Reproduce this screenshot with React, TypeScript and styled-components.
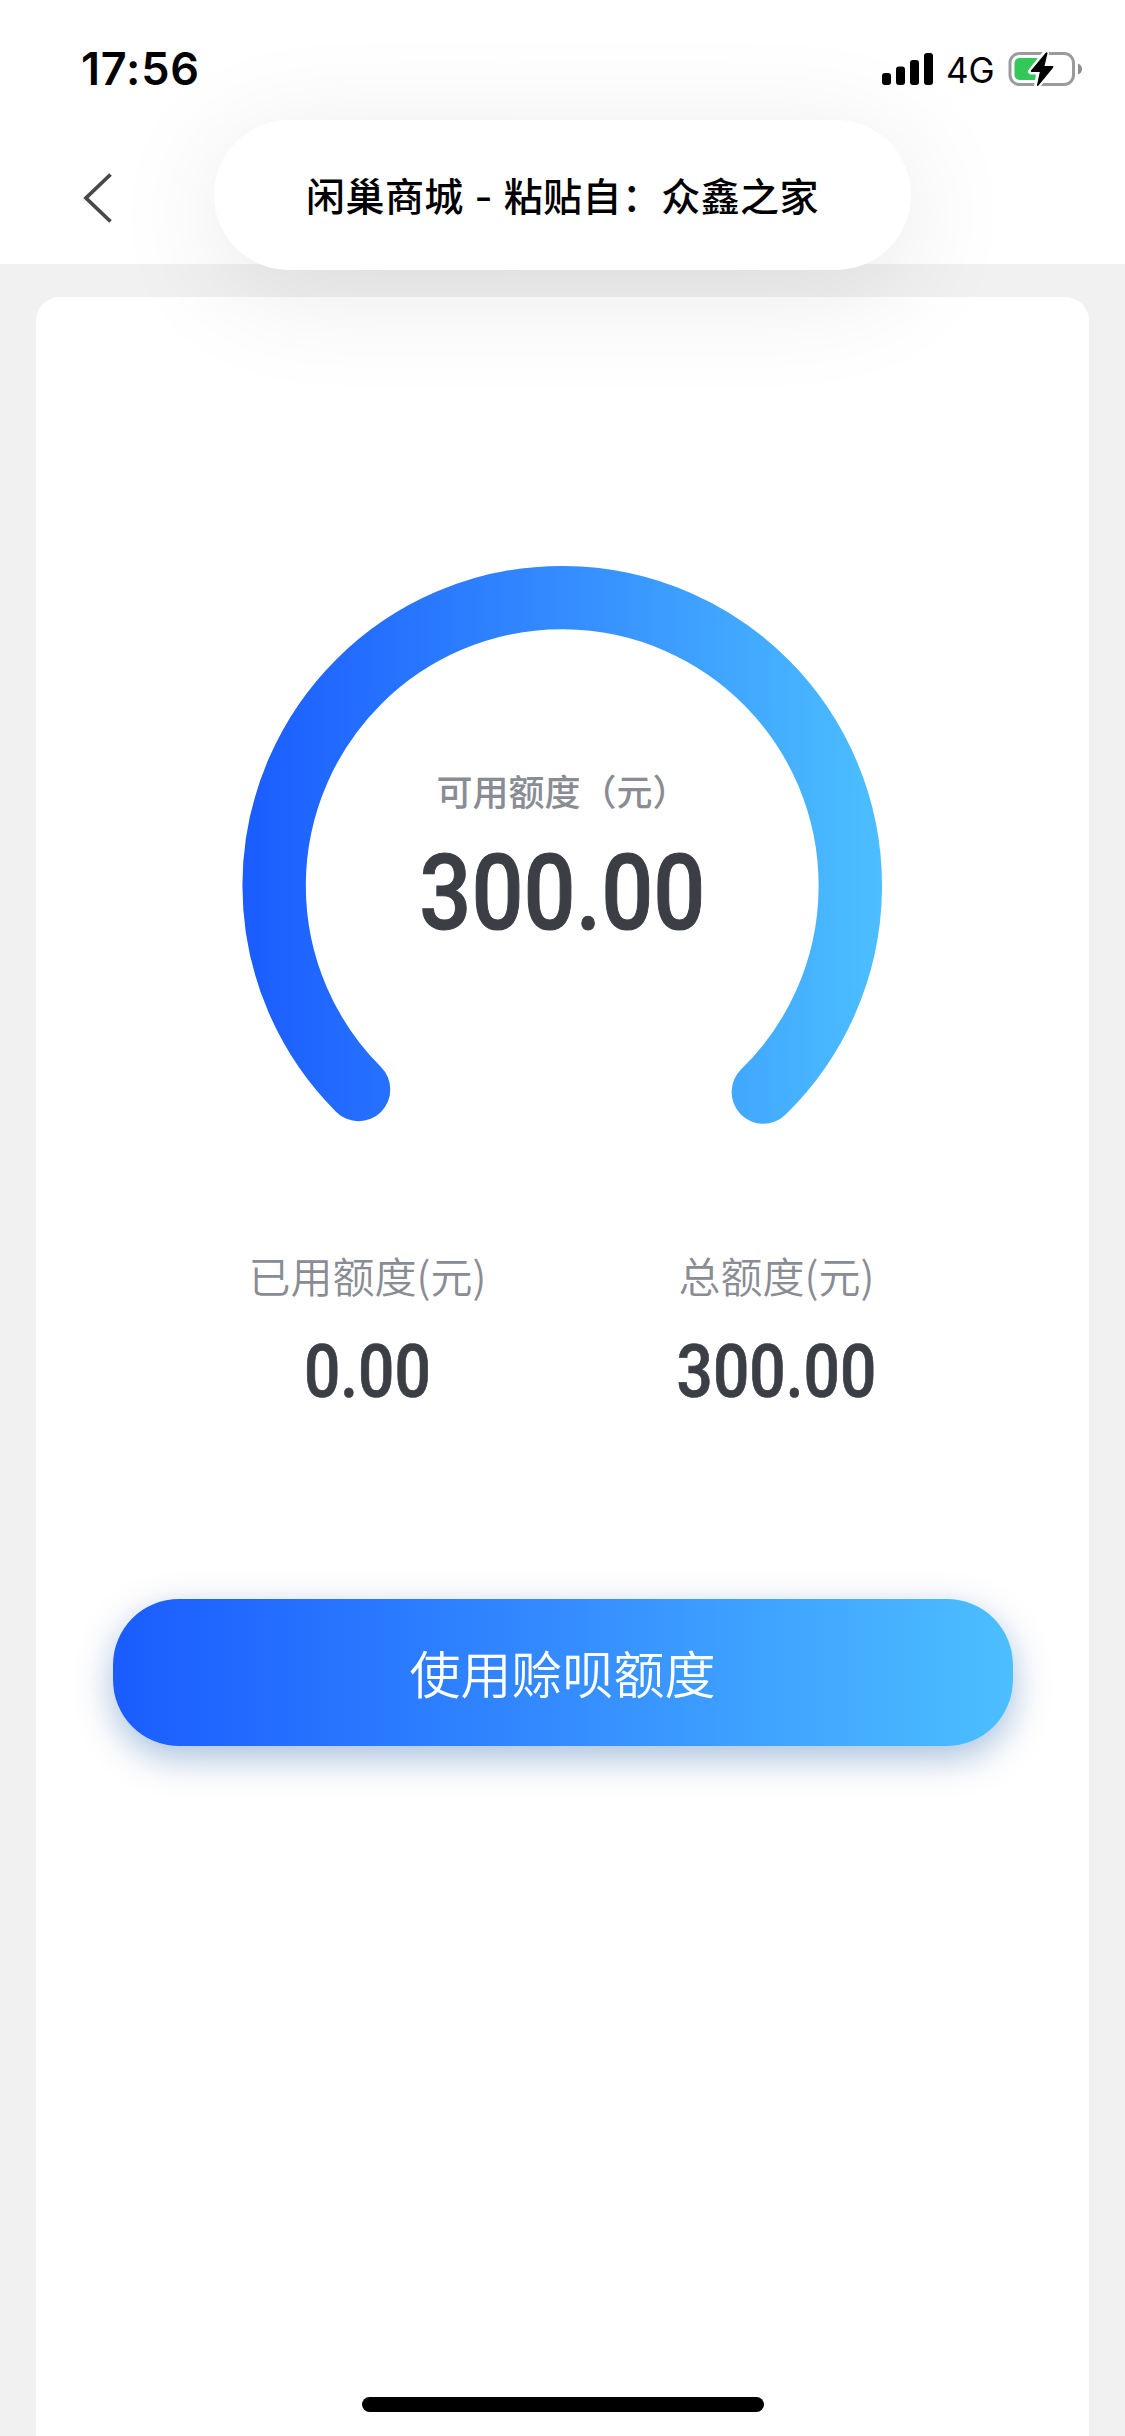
import React from "react";
import styled, { createGlobalStyle } from "styled-components";

const cjk = `"Noto Sans CJK SC", "Noto Sans", sans-serif`;

const GlobalStyle = createGlobalStyle`
  * { box-sizing: border-box; }
  body { margin: 0; background: #f1f1f1; font-family: ${cjk}; }
`;

const Screen = styled.div`
  position: relative;
  display: flex;
  flex-direction: column;
  width: 1125px;
  height: 2436px;
  overflow: hidden;
  background: #f1f1f1;
`;

const Header = styled.header`
  display: flex;
  flex-direction: column;
  height: 264px;
  flex: none;
  background: #fff;
`;

const StatusBar = styled.div`
  display: flex;
  align-items: center;
  justify-content: space-between;
  height: 138px;
  padding: 0 43px 0 81px;
  color: #000;
  font-family: Inter, "Liberation Sans", sans-serif;
`;

const Clock = styled.time`
  font-size: 45px;
  font-weight: 600;
  line-height: 54px;
  letter-spacing: 0.8px;
`;

const StatusIcons = styled.div`
  display: flex;
  align-items: center;
`;

const Network = styled.span`
  width: 74px;
  padding-left: 12px;
  padding-top: 2px;
  font-size: 35px;
  line-height: 44px;
`;

const NavBar = styled.nav`
  display: flex;
  align-items: center;
  height: 119px;
  padding-left: 82px;
`;

const BackButton = styled.button`
  display: flex;
  padding: 0;
  border: 0;
  background: none;
`;

const Card = styled.main`
  display: flex;
  flex-direction: column;
  align-items: center;
  flex: 1;
  margin: 33px 36px 0;
  padding-top: 269px;
  border-radius: 24px 24px 0 0;
  background: #fff;
`;

const Gauge = styled.section`
  display: grid;
  width: 640px;
  height: 560px;
  > * { grid-area: 1 / 1; }
  > svg { overflow: visible; }
`;

const GaugeContent = styled.div`
  display: flex;
  flex-direction: column;
  align-items: center;
  padding-top: 197px;
`;

const GaugeLabel = styled.div`
  margin-bottom: 13px;
  color: #8a8c94;
  font-size: 36px;
  font-weight: 500;
  line-height: 54px;
  white-space: nowrap;
`;

const Amount = styled.div<{ $size: number }>`
  color: #3b3e44;
  font-family: Roboto, "Liberation Sans", sans-serif;
  font-size: ${(p) => p.$size}px;
  font-weight: 500;
  line-height: 1.2;
  white-space: nowrap;
  transform: scaleX(0.865);
  -webkit-text-stroke: 0.01em #3b3e44;
`;

const Stats = styled.section`
  display: flex;
  justify-content: space-between;
  width: 628px;
  height: 160px;
  margin-top: 118px;
`;

const Stat = styled.div<{ $width: number }>`
  display: flex;
  flex-direction: column;
  align-items: center;
  width: ${(p) => p.$width}px;
`;

const StatLabel = styled.div`
  margin-bottom: 22px;
  color: #8a8c94;
  font-size: 42px;
  font-weight: 350;
  line-height: 62px;
  white-space: nowrap;
`;

const PrimaryButton = styled.button`
  width: 900px;
  height: 147px;
  margin-top: 195px;
  padding: 0 0 2px;
  border: 0;
  border-radius: 66px;
  background: linear-gradient(90deg, #1a5cff 0%, #348cff 50%, #4cbfff 100%);
  box-shadow: 0 12px 36px rgba(0, 74, 158, 0.35);
  color: #fff;
  font-family: ${cjk};
  font-size: 51px;
  font-weight: 350;
`;

const Toast = styled.div`
  position: absolute;
  top: 120px;
  left: 214px;
  display: flex;
  align-items: center;
  justify-content: center;
  width: 697px;
  height: 150px;
  padding-bottom: 3px;
  border-radius: 75px;
  background: #fff;
  box-shadow: 0 20px 115px rgba(0, 0, 0, 0.095);
  color: #000;
  font-family: Inter, ${cjk};
  font-size: 39px;
  font-weight: 500;
  letter-spacing: 0.4px;
  white-space: nowrap;
`;

const HomeIndicator = styled.div`
  position: absolute;
  bottom: 24px;
  left: 362px;
  width: 402px;
  height: 15px;
  border-radius: 8px;
  background: #000;
`;

const SignalIcon = () => (
  <svg width="52" height="34" viewBox="0 0 52 34">
    <rect x="0" y="21" width="9" height="12" rx="3" />
    <rect x="14" y="14.5" width="9" height="18.5" rx="3" />
    <rect x="28" y="8" width="9" height="25" rx="3" />
    <rect x="42" y="1" width="9" height="32" rx="3" />
  </svg>
);

const BatteryIcon = () => (
  <svg width="74" height="38" viewBox="0 0 74 38">
    <rect x="2" y="3.5" width="63.5" height="31" rx="9.5" fill="none" stroke="#9b9b9b" strokeWidth="3" />
    <path d="M70 13.5q4 1.5 4 5.5t-4 5.5z" fill="#8e8e8e" />
    <rect x="6.5" y="8" width="26" height="22" rx="5" fill="#34c759" />
    <path
      d="M38 2.5L23 21.5h8.5L29 36L45.5 15.5h-9.5z"
      fill="#fff"
      stroke="#fff"
      strokeWidth="6"
      strokeLinejoin="round"
    />
    <path
      d="M38 2.5L23 20.5q-.8 1.5.8 1.5h8L29 35q0 1.8 1.5.5L45.3 17.5q.7-1.5-.8-1.5H36.5L39.5 3.5q0-1.8-1.5-1z"
      fill="#000"
    />
  </svg>
);

const BackIcon = () => (
  <svg width="30" height="50" viewBox="0 0 30 50">
    <path d="M28.5 1.5L4 25L28.5 48.5" fill="none" stroke="#484848" strokeWidth="3.8" />
  </svg>
);

const GaugeArc = () => (
  <svg width="640" height="560" viewBox="0 0 640 560">
    <defs>
      <linearGradient id="arc" gradientUnits="userSpaceOnUse" x1="0" y1="0" x2="640" y2="0">
        <stop offset="0" stopColor="#1a5cff" />
        <stop offset="0.5" stopColor="#348cff" />
        <stop offset="1" stopColor="#4cbfff" />
      </linearGradient>
    </defs>
    <path
      d="M115.6 523.5A288.1 288.1 0 1 1 520.3 526"
      fill="none"
      stroke="url(#arc)"
      strokeWidth="63.4"
      strokeLinecap="round"
    />
  </svg>
);

export default function App() {
  return (
    <>
      <GlobalStyle />
      <Screen>
        <Header>
          <StatusBar>
            <Clock>17:56</Clock>
            <StatusIcons>
              <SignalIcon />
              <Network>4G</Network>
              <BatteryIcon />
            </StatusIcons>
          </StatusBar>
          <NavBar>
            <BackButton>
              <BackIcon />
            </BackButton>
          </NavBar>
        </Header>
        <Card>
          <Gauge>
            <GaugeArc />
            <GaugeContent>
              <GaugeLabel>可用额度（元）</GaugeLabel>
              <Amount $size={106}>300.00</Amount>
            </GaugeContent>
          </Gauge>
          <Stats>
            <Stat $width={238}>
              <StatLabel>已用额度(元)</StatLabel>
              <Amount $size={74}>0.00</Amount>
            </Stat>
            <Stat $width={200}>
              <StatLabel>总额度(元)</StatLabel>
              <Amount $size={74}>300.00</Amount>
            </Stat>
          </Stats>
          <PrimaryButton>使用赊呗额度</PrimaryButton>
        </Card>
        <Toast>闲巢商城 - 粘贴自：众鑫之家</Toast>
        <HomeIndicator />
      </Screen>
    </>
  );
}
